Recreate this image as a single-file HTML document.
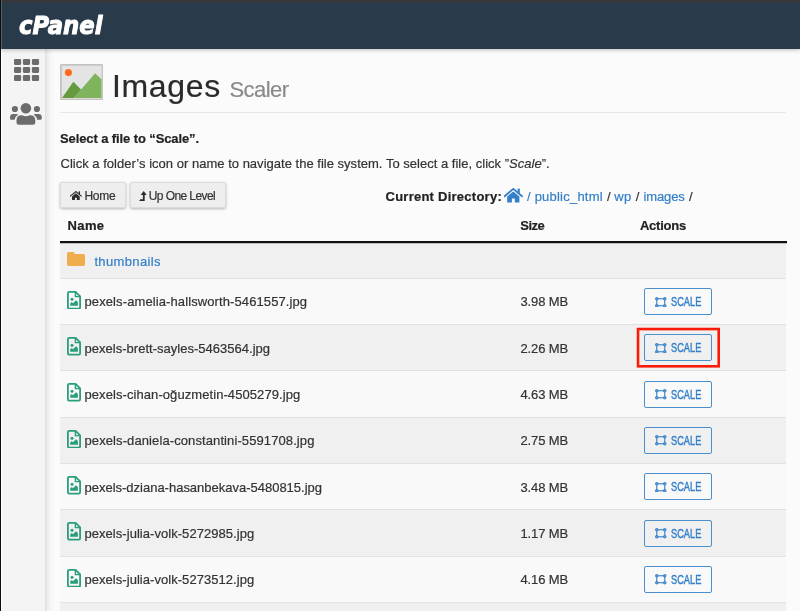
<!DOCTYPE html><html lang="en"><head><meta charset="utf-8"><title>Images Scaler</title><style>
*{box-sizing:border-box;margin:0;padding:0}
html,body{width:800px;height:611px;overflow:hidden}
body{position:relative;background:#fbfbfb;font-family:"Liberation Sans",sans-serif;font-size:13px;line-height:1;color:#333;-webkit-text-stroke:.2px}
.abs{position:absolute;white-space:nowrap}
#wrap{position:absolute;left:0;top:0;width:800px;height:611px;will-change:transform}
#topstrip{left:0;top:0;width:800px;height:2px;background:#39373b;border-bottom:1px solid #313840;box-sizing:content-box}
#header{left:0;top:2px;width:800px;height:47px;background:#293a4a;box-shadow:0 1px 4px rgba(0,0,0,.24)}
#leftedge{left:0;top:0;width:1px;height:611px;background:#0d0d0d;z-index:9}
#leftedge2{left:1px;top:0;width:1px;height:49px;background:#566170;z-index:9}
#sidebar{left:1px;top:49px;width:44px;height:562px;background:#f4f4f4;border-left:1px solid #fff}
#sideshadow{left:45px;top:49px;width:9px;height:562px;background:linear-gradient(to right,#dfdfdf 0,#ececec 25%,#f6f6f6 60%,#fafafa 100%)}
#hr{left:60px;top:112px;width:726px;height:1px;background:#e7e7e7}
.b{font-weight:700}
.btn{height:26px;background:#eeeeee;border:1px solid #dcdcdc;border-radius:2px;box-shadow:0 1px 3px rgba(0,0,0,.28)}
.t12{font-size:12px}
a{color:#337fc8;text-decoration:none}
svg{display:block}
#thead-line{left:60px;top:241px;width:726.500px;height:2px;background:#111;box-shadow:0 1px 0 rgba(0,0,0,.25)}
.row{left:60px;width:726px}
.row{background:#f9f9f9}
.row.g{background:#f0f0f0}
.row .line{position:absolute;left:0;bottom:0;width:100%;height:1px;background:#e2e2e2}
.scale{left:584px;width:67.800px;height:27px;border:1px solid #4a8fce;border-radius:2px}
.scale span{position:absolute;left:26px;top:7.100px;font-size:12px;color:#337fc8;transform:scaleX(.77);transform-origin:0 0;-webkit-text-stroke:.4px}
.scale svg{position:absolute;left:10px;top:7.500px}
</style></head><body><div id="wrap">
<div class="abs" id="sidebar"></div><div class="abs" id="sideshadow"></div>
<div class="abs" id="header"></div><div class="abs" id="topstrip"></div><div class="abs" id="leftedge"></div><div class="abs" id="leftedge2"></div>
<svg class="abs" style="left:14px;top:8px" width="100" height="34" viewBox="0 0 100 34"><text x="5" y="26.100" font-family="DejaVu Sans, Liberation Sans, sans-serif" font-weight="700" font-style="oblique" font-size="25" fill="#ffffff" stroke="#ffffff" stroke-width="1" stroke-linejoin="round" textLength="83.500" lengthAdjust="spacingAndGlyphs">cPanel</text></svg>
<div class="abs" style="left:13.600px;top:59.300px"><svg width="26" height="23" viewBox="0 0 26 23"><rect x="0.00" y="0.00" width="7.150" height="5.900" rx="1.100" fill="#6c6c6c"/><rect x="8.95" y="0.00" width="7.150" height="5.900" rx="1.100" fill="#6c6c6c"/><rect x="17.90" y="0.00" width="7.150" height="5.900" rx="1.100" fill="#6c6c6c"/><rect x="0.00" y="8.05" width="7.150" height="5.900" rx="1.100" fill="#6c6c6c"/><rect x="8.95" y="8.05" width="7.150" height="5.900" rx="1.100" fill="#6c6c6c"/><rect x="17.90" y="8.05" width="7.150" height="5.900" rx="1.100" fill="#6c6c6c"/><rect x="0.00" y="16.10" width="7.150" height="5.900" rx="1.100" fill="#6c6c6c"/><rect x="8.95" y="16.10" width="7.150" height="5.900" rx="1.100" fill="#6c6c6c"/><rect x="17.90" y="16.10" width="7.150" height="5.900" rx="1.100" fill="#6c6c6c"/></svg></div>
<div class="abs" style="left:9.900px;top:103.100px"><svg width="31.800" height="21.800" viewBox="0 0 31.800 21.800"><g fill="#6c6c6c"><circle cx="15.900" cy="5.300" r="5.300"/><path d="M6.500 19.300 V17.500 Q6.500 12.300 11.500 12.300 H12.200 Q15.900 14.100 19.600 12.300 H20.300 Q25.300 12.300 25.300 17.500 V19.300 Q25.300 21.800 22.800 21.800 H9 Q6.500 21.800 6.500 19.300 Z"/><circle cx="4.900" cy="6" r="3.100"/><circle cx="26.900" cy="6" r="3.100"/><path d="M0 14.300 Q0 10.900 3.200 10.900 H6.400 Q7.500 10.900 8.200 11.400 Q5.200 13.200 4.600 16.800 H1.500 Q0 16.800 0 15.300 Z"/><path d="M31.800 14.300 Q31.800 10.900 28.600 10.900 H25.400 Q24.300 10.900 23.600 11.400 Q26.600 13.200 27.200 16.800 H30.300 Q31.800 16.800 31.800 15.300 Z"/></g></svg></div>
<div class="abs" style="left:59.900px;top:63.800px"><svg width="43.500" height="36.500" viewBox="0 0 44 37" preserveAspectRatio="none"><rect x="0.9" y="0.9" width="42.2" height="35.2" rx="0.600" fill="#e4e4e4" stroke="#c3c3c3" stroke-width="1.8"/><circle cx="8.5" cy="8.7" r="3.6" fill="#ff6a1c"/><path d="M2 34.5 L13.5 18 L21.5 26 L14 34.5 Z" fill="#669a3f"/><path d="M14 34.5 L35.5 9.5 L42 15.5 V34.5 Z" fill="#7fb45c"/></svg></div>
<h1 class="abs" style="left:112px;top:70.400px;font-size:32px;font-weight:400;color:#2a2a2a;letter-spacing:.65px">Images</h1>
<div class="abs" style="left:229.500px;top:78.900px;font-size:22px;color:#8a8a8a;letter-spacing:-.56px">Scaler</div>
<div class="abs" id="hr"></div>
<div class="abs b" style="left:60px;top:131.900px;color:#222;letter-spacing:-.105px">Select a file to “Scale”.</div>
<div class="abs" style="left:60.500px;top:157.200px;letter-spacing:.016px">Click a folder’s icon or name to navigate the file system. To select a file, click ”<i>Scale</i>”.</div>
<div class="abs btn" style="left:60px;top:182px;width:65.500px"><span class="abs" style="left:9px;top:7.800px"><svg width="12" height="9.4" viewBox="0 0 19 15" preserveAspectRatio="none"><path d="M0.600 8.200 L9.300 0.900 L18 8.200" fill="none" stroke="#2b2b2b" stroke-width="1.800" stroke-linecap="round" stroke-linejoin="miter"/><rect x="13.600" y="0.600" width="2.200" height="4.600" fill="#2b2b2b"/><path d="M3.200 8.600 L9.300 3.500 L15.400 8.600 V14.600 H10.800 V10.600 H7.900 V14.600 H3.200 Z" fill="#2b2b2b"/></svg></span><span class="abs t12" style="left:23.500px;top:6.800px;letter-spacing:-.316px">Home</span></div>
<div class="abs btn" style="left:129.500px;top:182px;width:96px"><span class="abs" style="left:8.500px;top:7.500px"><svg width="8" height="10" viewBox="0 0 8 10"><path d="M4.700 0 L7.700 4 H5.700 V10 H0.200 L1.300 8.300 H3.900 V4 H1.700 Z" fill="#2b2b2b"/></svg></span><span class="abs t12" style="left:18.200px;top:7px;letter-spacing:-.574px">Up One Level</span></div>
<div class="abs b" style="left:385.500px;top:190px;color:#222;letter-spacing:.25px">Current Directory:</div>
<div class="abs" style="left:504.300px;top:188.400px"><svg width="19" height="15" viewBox="0 0 19 15" preserveAspectRatio="none"><path d="M0.600 8.200 L9.300 0.900 L18 8.200" fill="none" stroke="#337fc8" stroke-width="1.800" stroke-linecap="round" stroke-linejoin="miter"/><rect x="13.600" y="0.600" width="2.200" height="4.600" fill="#337fc8"/><path d="M3.200 8.600 L9.300 3.500 L15.400 8.600 V14.600 H10.800 V10.600 H7.900 V14.600 H3.200 Z" fill="#337fc8"/></svg></div>
<div class="abs" style="left:527px;top:190px"><a href="#" style="letter-spacing:.22px">/ public_html</a></div>
<div class="abs" style="left:607px;top:190px">/</div>
<div class="abs" style="left:614.300px;top:190px"><a href="#" style="letter-spacing:.34px">wp</a></div>
<div class="abs" style="left:635.800px;top:190px">/</div>
<div class="abs" style="left:643.500px;top:190px"><a href="#" style="letter-spacing:-.12px">images</a></div>
<div class="abs" style="left:689px;top:190px">/</div>
<div class="abs b" style="left:67.500px;top:218.500px;color:#222;letter-spacing:.395px">Name</div>
<div class="abs b" style="left:520.300px;top:218.500px;color:#222;letter-spacing:-.529px">Size</div>
<div class="abs b" style="left:639.900px;top:218.500px;color:#222;letter-spacing:-.21px">Actions</div>
<div class="abs" id="thead-line"></div>
<div class="abs row g" style="top:243.500px;height:35.500px"><span class="abs" style="left:7px;top:8.600px"><svg width="18" height="14" viewBox="0 0 18 14"><path d="M0 1.8 Q0 0 1.8 0 H6 Q7.6 0 7.6 1.4 V1.9 H16.2 Q18 1.9 18 3.7 V12.2 Q18 14 16.2 14 H1.8 Q0 14 0 12.2 Z" fill="#f0ad4e"/></svg></span><a href="#" class="abs" style="left:34.400px;top:11.500px;letter-spacing:.36px">thumbnails</a><div class="line"></div></div>
<div class="abs row" style="top:279px;height:46px"><span class="abs" style="left:7px;top:11.80px"><svg width="14" height="18.5" viewBox="0 0 14 18.5"><path d="M2.2 0.9 H8.6 L13.1 5.4 V16.3 Q13.1 17.6 11.8 17.6 H2.2 Q0.9 17.6 0.9 16.3 V2.2 Q0.9 0.9 2.2 0.9 Z" fill="none" stroke="#2a9d7c" stroke-width="1.8" stroke-linejoin="round"/><path d="M8.4 1 V5.6 H13" fill="none" stroke="#2a9d7c" stroke-width="1.4"/><circle cx="5" cy="8.2" r="1.5" fill="#2a9d7c"/><path d="M3.2 14.8 V12.6 L4.8 11 L6 12.2 L9 9.2 L10.9 11.1 V14.8 Z" fill="#2a9d7c"/></svg></span><span class="abs" style="left:24.500px;top:16.40px;letter-spacing:0.104px">pexels-amelia-hallsworth-5461557.jpg</span><span class="abs" style="left:460.400px;top:16.40px;letter-spacing:-.1px">3.98 MB</span><div class="abs scale" style="top:9.00px"><svg width="11.500" height="10.500" viewBox="0 0 11.500 10.500"><rect x="1.750" y="1.750" width="8" height="7" fill="none" stroke="#3c86cc" stroke-width="1.150"/><circle cx="1.75" cy="1.75" r="1.750" fill="#3c86cc"/><circle cx="1.75" cy="1.75" r=".600" fill="#7fb0de"/><circle cx="9.75" cy="1.75" r="1.750" fill="#3c86cc"/><circle cx="9.75" cy="1.75" r=".600" fill="#7fb0de"/><circle cx="1.75" cy="8.75" r="1.750" fill="#3c86cc"/><circle cx="1.75" cy="8.75" r=".600" fill="#7fb0de"/><circle cx="9.75" cy="8.75" r="1.750" fill="#3c86cc"/><circle cx="9.75" cy="8.75" r=".600" fill="#7fb0de"/></svg><span>SCALE</span></div><div class="line"></div></div>
<div class="abs row g" style="top:325px;height:46px"><span class="abs" style="left:7px;top:12.13px"><svg width="14" height="18.5" viewBox="0 0 14 18.5"><path d="M2.2 0.9 H8.6 L13.1 5.4 V16.3 Q13.1 17.6 11.8 17.6 H2.2 Q0.9 17.6 0.9 16.3 V2.2 Q0.9 0.9 2.2 0.9 Z" fill="none" stroke="#2a9d7c" stroke-width="1.8" stroke-linejoin="round"/><path d="M8.4 1 V5.6 H13" fill="none" stroke="#2a9d7c" stroke-width="1.4"/><circle cx="5" cy="8.2" r="1.5" fill="#2a9d7c"/><path d="M3.2 14.8 V12.6 L4.8 11 L6 12.2 L9 9.2 L10.9 11.1 V14.8 Z" fill="#2a9d7c"/></svg></span><span class="abs" style="left:24.500px;top:16.73px;letter-spacing:0.019px">pexels-brett-sayles-5463564.jpg</span><span class="abs" style="left:460.400px;top:16.73px;letter-spacing:-.1px">2.26 MB</span><div class="abs scale" style="top:9.33px"><svg width="11.500" height="10.500" viewBox="0 0 11.500 10.500"><rect x="1.750" y="1.750" width="8" height="7" fill="none" stroke="#3c86cc" stroke-width="1.150"/><circle cx="1.75" cy="1.75" r="1.750" fill="#3c86cc"/><circle cx="1.75" cy="1.75" r=".600" fill="#7fb0de"/><circle cx="9.75" cy="1.75" r="1.750" fill="#3c86cc"/><circle cx="9.75" cy="1.75" r=".600" fill="#7fb0de"/><circle cx="1.75" cy="8.75" r="1.750" fill="#3c86cc"/><circle cx="1.75" cy="8.75" r=".600" fill="#7fb0de"/><circle cx="9.75" cy="8.75" r="1.750" fill="#3c86cc"/><circle cx="9.75" cy="8.75" r=".600" fill="#7fb0de"/></svg><span>SCALE</span></div><div class="line"></div></div>
<div class="abs row" style="top:371px;height:47px"><span class="abs" style="left:7px;top:12.46px"><svg width="14" height="18.5" viewBox="0 0 14 18.5"><path d="M2.2 0.9 H8.6 L13.1 5.4 V16.3 Q13.1 17.6 11.8 17.6 H2.2 Q0.9 17.6 0.9 16.3 V2.2 Q0.9 0.9 2.2 0.9 Z" fill="none" stroke="#2a9d7c" stroke-width="1.8" stroke-linejoin="round"/><path d="M8.4 1 V5.6 H13" fill="none" stroke="#2a9d7c" stroke-width="1.4"/><circle cx="5" cy="8.2" r="1.5" fill="#2a9d7c"/><path d="M3.2 14.8 V12.6 L4.8 11 L6 12.2 L9 9.2 L10.9 11.1 V14.8 Z" fill="#2a9d7c"/></svg></span><span class="abs" style="left:24.500px;top:17.06px;letter-spacing:0.076px">pexels-cihan-oğuzmetin-4505279.jpg</span><span class="abs" style="left:460.400px;top:17.06px;letter-spacing:-.1px">4.63 MB</span><div class="abs scale" style="top:9.66px"><svg width="11.500" height="10.500" viewBox="0 0 11.500 10.500"><rect x="1.750" y="1.750" width="8" height="7" fill="none" stroke="#3c86cc" stroke-width="1.150"/><circle cx="1.75" cy="1.75" r="1.750" fill="#3c86cc"/><circle cx="1.75" cy="1.75" r=".600" fill="#7fb0de"/><circle cx="9.75" cy="1.75" r="1.750" fill="#3c86cc"/><circle cx="9.75" cy="1.75" r=".600" fill="#7fb0de"/><circle cx="1.75" cy="8.75" r="1.750" fill="#3c86cc"/><circle cx="1.75" cy="8.75" r=".600" fill="#7fb0de"/><circle cx="9.75" cy="8.75" r="1.750" fill="#3c86cc"/><circle cx="9.75" cy="8.75" r=".600" fill="#7fb0de"/></svg><span>SCALE</span></div><div class="line"></div></div>
<div class="abs row g" style="top:418px;height:46px"><span class="abs" style="left:7px;top:11.79px"><svg width="14" height="18.5" viewBox="0 0 14 18.5"><path d="M2.2 0.9 H8.6 L13.1 5.4 V16.3 Q13.1 17.6 11.8 17.6 H2.2 Q0.9 17.6 0.9 16.3 V2.2 Q0.9 0.9 2.2 0.9 Z" fill="none" stroke="#2a9d7c" stroke-width="1.8" stroke-linejoin="round"/><path d="M8.4 1 V5.6 H13" fill="none" stroke="#2a9d7c" stroke-width="1.4"/><circle cx="5" cy="8.2" r="1.5" fill="#2a9d7c"/><path d="M3.2 14.8 V12.6 L4.8 11 L6 12.2 L9 9.2 L10.9 11.1 V14.8 Z" fill="#2a9d7c"/></svg></span><span class="abs" style="left:24.500px;top:16.39px;letter-spacing:0.1px">pexels-daniela-constantini-5591708.jpg</span><span class="abs" style="left:460.400px;top:16.39px;letter-spacing:-.1px">2.75 MB</span><div class="abs scale" style="top:8.99px"><svg width="11.500" height="10.500" viewBox="0 0 11.500 10.500"><rect x="1.750" y="1.750" width="8" height="7" fill="none" stroke="#3c86cc" stroke-width="1.150"/><circle cx="1.75" cy="1.75" r="1.750" fill="#3c86cc"/><circle cx="1.75" cy="1.75" r=".600" fill="#7fb0de"/><circle cx="9.75" cy="1.75" r="1.750" fill="#3c86cc"/><circle cx="9.75" cy="1.75" r=".600" fill="#7fb0de"/><circle cx="1.75" cy="8.75" r="1.750" fill="#3c86cc"/><circle cx="1.75" cy="8.75" r=".600" fill="#7fb0de"/><circle cx="9.75" cy="8.75" r="1.750" fill="#3c86cc"/><circle cx="9.75" cy="8.75" r=".600" fill="#7fb0de"/></svg><span>SCALE</span></div><div class="line"></div></div>
<div class="abs row" style="top:464px;height:46px"><span class="abs" style="left:7px;top:12.12px"><svg width="14" height="18.5" viewBox="0 0 14 18.5"><path d="M2.2 0.9 H8.6 L13.1 5.4 V16.3 Q13.1 17.6 11.8 17.6 H2.2 Q0.9 17.6 0.9 16.3 V2.2 Q0.9 0.9 2.2 0.9 Z" fill="none" stroke="#2a9d7c" stroke-width="1.8" stroke-linejoin="round"/><path d="M8.4 1 V5.6 H13" fill="none" stroke="#2a9d7c" stroke-width="1.4"/><circle cx="5" cy="8.2" r="1.5" fill="#2a9d7c"/><path d="M3.2 14.8 V12.6 L4.8 11 L6 12.2 L9 9.2 L10.9 11.1 V14.8 Z" fill="#2a9d7c"/></svg></span><span class="abs" style="left:24.500px;top:16.72px;letter-spacing:-0.008px">pexels-dziana-hasanbekava-5480815.jpg</span><span class="abs" style="left:460.400px;top:16.72px;letter-spacing:-.1px">3.48 MB</span><div class="abs scale" style="top:9.32px"><svg width="11.500" height="10.500" viewBox="0 0 11.500 10.500"><rect x="1.750" y="1.750" width="8" height="7" fill="none" stroke="#3c86cc" stroke-width="1.150"/><circle cx="1.75" cy="1.75" r="1.750" fill="#3c86cc"/><circle cx="1.75" cy="1.75" r=".600" fill="#7fb0de"/><circle cx="9.75" cy="1.75" r="1.750" fill="#3c86cc"/><circle cx="9.75" cy="1.75" r=".600" fill="#7fb0de"/><circle cx="1.75" cy="8.75" r="1.750" fill="#3c86cc"/><circle cx="1.75" cy="8.75" r=".600" fill="#7fb0de"/><circle cx="9.75" cy="8.75" r="1.750" fill="#3c86cc"/><circle cx="9.75" cy="8.75" r=".600" fill="#7fb0de"/></svg><span>SCALE</span></div><div class="line"></div></div>
<div class="abs row g" style="top:510px;height:47px"><span class="abs" style="left:7px;top:12.45px"><svg width="14" height="18.5" viewBox="0 0 14 18.5"><path d="M2.2 0.9 H8.6 L13.1 5.4 V16.3 Q13.1 17.6 11.8 17.6 H2.2 Q0.9 17.6 0.9 16.3 V2.2 Q0.9 0.9 2.2 0.9 Z" fill="none" stroke="#2a9d7c" stroke-width="1.8" stroke-linejoin="round"/><path d="M8.4 1 V5.6 H13" fill="none" stroke="#2a9d7c" stroke-width="1.4"/><circle cx="5" cy="8.2" r="1.5" fill="#2a9d7c"/><path d="M3.2 14.8 V12.6 L4.8 11 L6 12.2 L9 9.2 L10.9 11.1 V14.8 Z" fill="#2a9d7c"/></svg></span><span class="abs" style="left:24.500px;top:17.05px;letter-spacing:0.045px">pexels-julia-volk-5272985.jpg</span><span class="abs" style="left:460.400px;top:17.05px;letter-spacing:-.1px">1.17 MB</span><div class="abs scale" style="top:9.65px"><svg width="11.500" height="10.500" viewBox="0 0 11.500 10.500"><rect x="1.750" y="1.750" width="8" height="7" fill="none" stroke="#3c86cc" stroke-width="1.150"/><circle cx="1.75" cy="1.75" r="1.750" fill="#3c86cc"/><circle cx="1.75" cy="1.75" r=".600" fill="#7fb0de"/><circle cx="9.75" cy="1.75" r="1.750" fill="#3c86cc"/><circle cx="9.75" cy="1.75" r=".600" fill="#7fb0de"/><circle cx="1.75" cy="8.75" r="1.750" fill="#3c86cc"/><circle cx="1.75" cy="8.75" r=".600" fill="#7fb0de"/><circle cx="9.75" cy="8.75" r="1.750" fill="#3c86cc"/><circle cx="9.75" cy="8.75" r=".600" fill="#7fb0de"/></svg><span>SCALE</span></div><div class="line"></div></div>
<div class="abs row" style="top:557px;height:46px"><span class="abs" style="left:7px;top:11.78px"><svg width="14" height="18.5" viewBox="0 0 14 18.5"><path d="M2.2 0.9 H8.6 L13.1 5.4 V16.3 Q13.1 17.6 11.8 17.6 H2.2 Q0.9 17.6 0.9 16.3 V2.2 Q0.9 0.9 2.2 0.9 Z" fill="none" stroke="#2a9d7c" stroke-width="1.8" stroke-linejoin="round"/><path d="M8.4 1 V5.6 H13" fill="none" stroke="#2a9d7c" stroke-width="1.4"/><circle cx="5" cy="8.2" r="1.5" fill="#2a9d7c"/><path d="M3.2 14.8 V12.6 L4.8 11 L6 12.2 L9 9.2 L10.9 11.1 V14.8 Z" fill="#2a9d7c"/></svg></span><span class="abs" style="left:24.500px;top:16.38px;letter-spacing:0.045px">pexels-julia-volk-5273512.jpg</span><span class="abs" style="left:460.400px;top:16.38px;letter-spacing:-.1px">4.16 MB</span><div class="abs scale" style="top:8.98px"><svg width="11.500" height="10.500" viewBox="0 0 11.500 10.500"><rect x="1.750" y="1.750" width="8" height="7" fill="none" stroke="#3c86cc" stroke-width="1.150"/><circle cx="1.75" cy="1.75" r="1.750" fill="#3c86cc"/><circle cx="1.75" cy="1.75" r=".600" fill="#7fb0de"/><circle cx="9.75" cy="1.75" r="1.750" fill="#3c86cc"/><circle cx="9.75" cy="1.75" r=".600" fill="#7fb0de"/><circle cx="1.75" cy="8.75" r="1.750" fill="#3c86cc"/><circle cx="1.75" cy="8.75" r=".600" fill="#7fb0de"/><circle cx="9.75" cy="8.75" r="1.750" fill="#3c86cc"/><circle cx="9.75" cy="8.75" r=".600" fill="#7fb0de"/></svg><span>SCALE</span></div><div class="line"></div></div>
<div class="abs row g" style="top:603.00px;height:46px"></div>
<svg class="abs" style="left:630px;top:320px" width="100" height="56" viewBox="0 0 100 56"><rect x="8.050" y="9.050" width="80.650" height="37.250" fill="none" stroke="#fb1a08" stroke-width="2.600"/></svg>
</div></body></html>
